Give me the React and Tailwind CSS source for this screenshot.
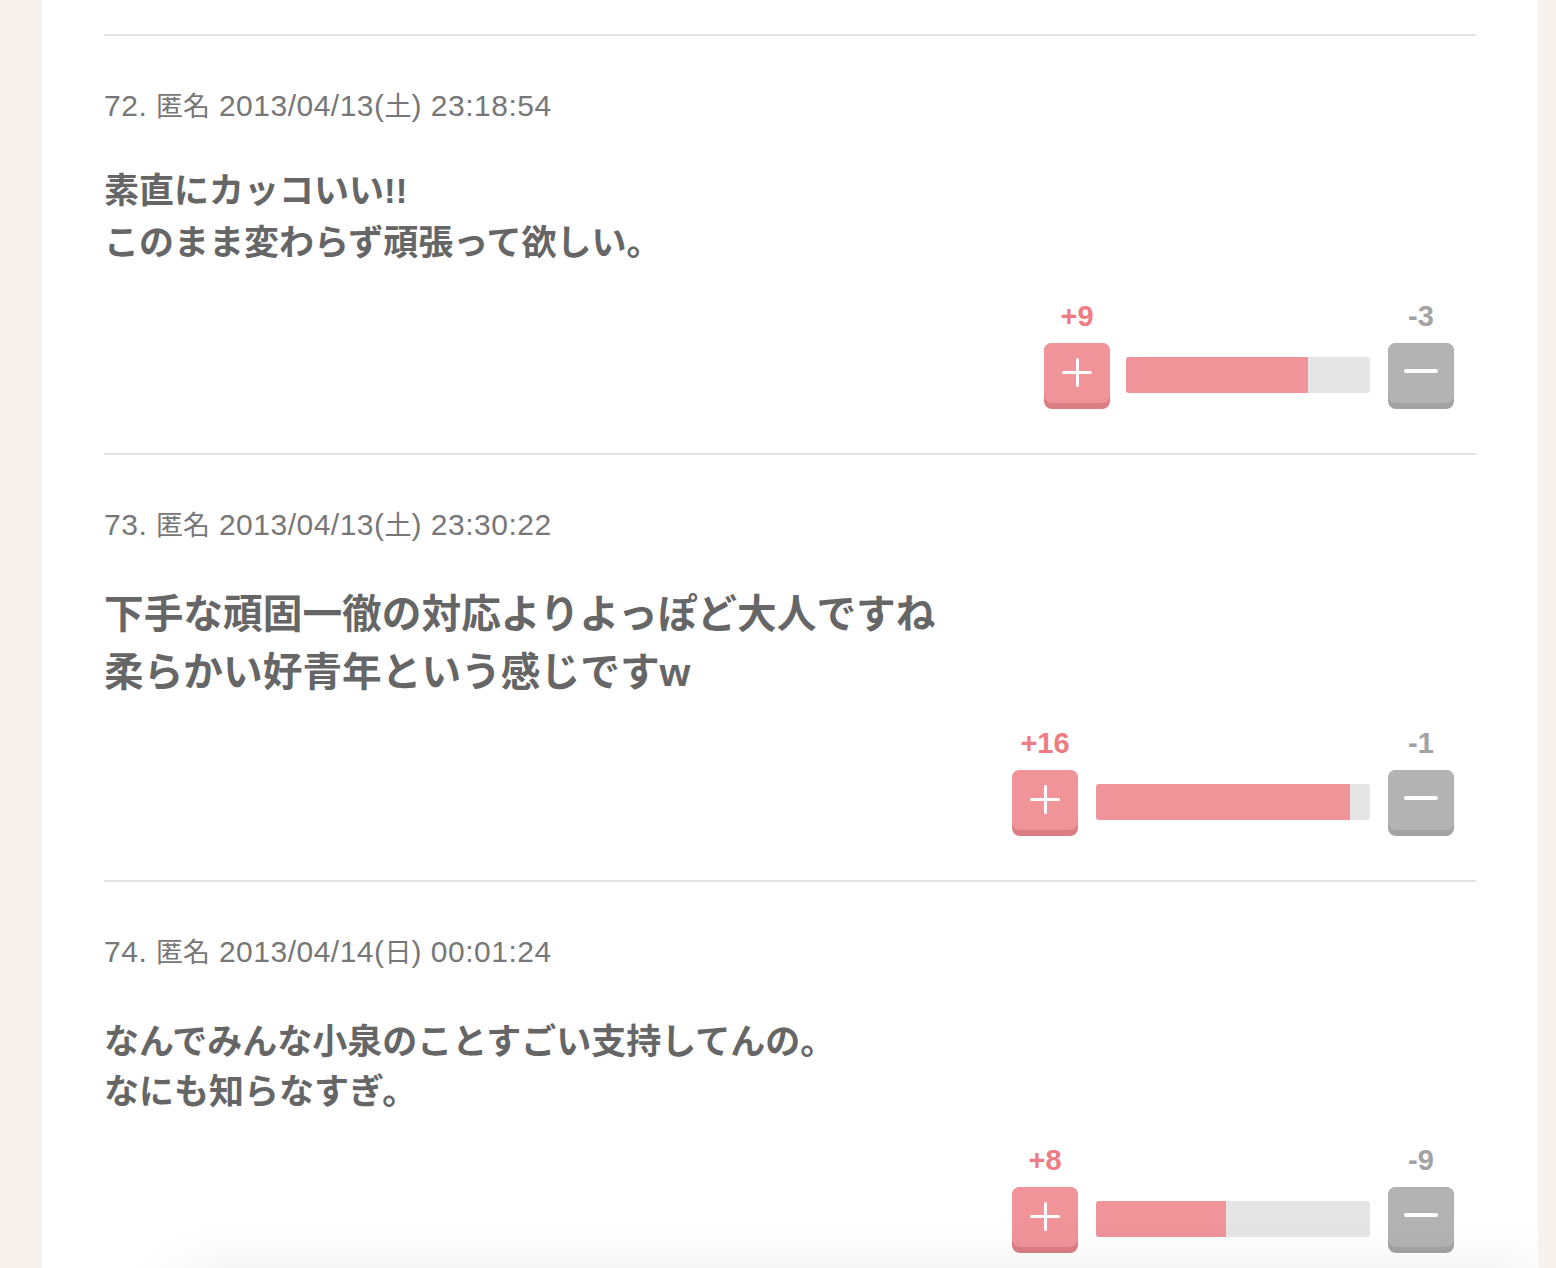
import React from "react";

const items = [
  {
    no: 72,
    day: "2013/04/13(",
    wd: "土",
    time: ") 23:18:54",
    lines: ["素直にカッコいい!!", "このまま変わらず頑張って欲しい。"],
    body: "mt-[37px] text-[35px] leading-[52px]",
    voteMt: "mt-[33px]",
    plus: 9,
    minus: 3,
    barW: 244,
    fill: 182,
    gap: 16,
  },
  {
    no: 73,
    day: "2013/04/13(",
    wd: "土",
    time: ") 23:30:22",
    lines: ["下手な頑固一徹の対応よりよっぽど大人ですね", "柔らかい好青年という感じですw"],
    body: "mt-[38px] text-[39.7px] leading-[58px]",
    voteMt: "mt-[28px]",
    plus: 16,
    minus: 1,
    barW: 274,
    fill: 254,
    gap: 18,
  },
  {
    no: 74,
    day: "2013/04/14(",
    wd: "日",
    time: ") 00:01:24",
    lines: ["なんでみんな小泉のことすごい支持してんの。", "なにも知らなすぎ。"],
    body: "mt-[43px] text-[35px] leading-[50px]",
    voteMt: "mt-[29px]",
    plus: 8,
    minus: 9,
    barW: 274,
    fill: 130,
    gap: 18,
  },
];

const FONT = { fontFamily: '"Liberation Sans", "Noto Sans CJK JP", sans-serif' };

function PlusButton() {
  return (
    <div className="w-[66px] h-[66px] rounded-[8px] bg-[#dc7c83]">
      <div className="relative w-[66px] h-[60px] rounded-[8px] bg-[#f0949a]">
        <div className="absolute left-[18px] top-[28px] w-[30px] h-[3px] rounded-full bg-white" />
        <div className="absolute left-[31.5px] top-[15px] w-[3px] h-[29px] rounded-full bg-white" />
      </div>
    </div>
  );
}

function MinusButton() {
  return (
    <div className="w-[66px] h-[66px] rounded-[8px] bg-[#a3a3a3]">
      <div className="relative w-[66px] h-[60px] rounded-[8px] bg-[#b3b3b3]">
        <div className="absolute left-[16px] top-[26px] w-[34px] h-[4px] rounded-full bg-white" />
      </div>
    </div>
  );
}

function Item({ it }) {
  return (
    <div className="pb-[44px]">
      <div
        className="mt-[49px] text-[30px] leading-[42px] tracking-[0.5px] text-[#777777] whitespace-nowrap"
        style={FONT}
      >
        {it.no}. <span className="text-[27px] tracking-normal">匿名</span> {it.day}
        <span className="text-[27px] tracking-normal">{it.wd}</span>
        {it.time}
      </div>
      <div className={"font-bold text-[#666666] " + it.body} style={FONT}>
        {it.lines.map((l, i) => (
          <div key={i}>{l}</div>
        ))}
      </div>
      <div className={"flex justify-end pr-[22px] " + it.voteMt} style={FONT}>
        <div className="flex flex-col items-center w-[66px]">
          <div className="h-[28px] leading-[28px] text-[29px] font-bold text-[#ee7c82] whitespace-nowrap">
            +{it.plus}
          </div>
          <div className="mt-[13px]">
            <PlusButton />
          </div>
        </div>
        <div className="mt-[55px]" style={{ marginLeft: it.gap, marginRight: 18 }}>
          <div
            className="h-[36px] rounded-[3px] bg-[#e5e5e5] overflow-hidden flex"
            style={{ width: it.barW }}
          >
            <div className="h-full bg-[#f0949a]" style={{ width: it.fill }} />
          </div>
        </div>
        <div className="flex flex-col items-center w-[66px]">
          <div className="h-[28px] leading-[28px] text-[29px] font-bold text-[#a3a3a3] whitespace-nowrap">
            -{it.minus}
          </div>
          <div className="mt-[13px]">
            <MinusButton />
          </div>
        </div>
      </div>
    </div>
  );
}

export default function App() {
  return (
    <div className="w-[1556px] h-[1268px] overflow-hidden bg-[#f9f2ec] flex">
      <div className="relative ml-[42px] w-[1496px] h-[1268px] overflow-hidden bg-white px-[62px] pt-[34px]">
        {items.map((it) => (
          <div key={it.no}>
            <div className="h-[2px] bg-[#e3e3e3]" />
            <Item it={it} />
          </div>
        ))}
        <div className="absolute left-[110px] right-0 bottom-[-70px] h-[70px] rounded-tl-[400px] bg-white shadow-[0_0_60px_rgba(0,0,0,0.07)]" />
      </div>
    </div>
  );
}
